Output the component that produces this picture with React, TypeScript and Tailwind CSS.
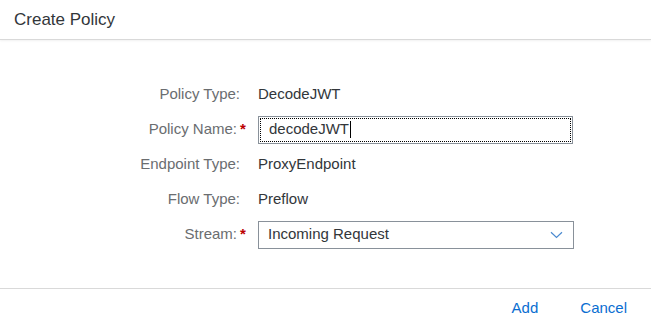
import React from 'react';

interface Row {
  label: string;
  required?: boolean;
  kind: 'text' | 'input' | 'select';
  value: string;
}

const rows: Row[] = [
  { label: 'Policy Type:', kind: 'text', value: 'DecodeJWT' },
  { label: 'Policy Name:', required: true, kind: 'input', value: 'decodeJWT' },
  { label: 'Endpoint Type:', kind: 'text', value: 'ProxyEndpoint' },
  { label: 'Flow Type:', kind: 'text', value: 'Preflow' },
  { label: 'Stream:', required: true, kind: 'select', value: 'Incoming Request' },
];

const Field: React.FC<{ row: Row }> = ({ row }) => {
  if (row.kind === 'input') {
    return (
      <div className="w-[315px] h-[28px] border border-[#89919a] bg-white p-px">
        <div className="h-full border border-dotted border-black flex items-center pl-[8px] text-[#32363a]">
          <span>{row.value}</span>
          <span className="w-px h-[17px] bg-black ml-px" />
        </div>
      </div>
    );
  }
  if (row.kind === 'select') {
    return (
      <div className="w-[316px] h-[28px] border border-[#89919a] bg-white flex items-center justify-between pl-[9px] pr-[10px] text-[#32363a]">
        <span>{row.value}</span>
        <svg width="13" height="8" viewBox="0 0 13 8" fill="none">
          <path d="M1 1.2 L6.5 6.4 L12 1.2" stroke="#4b8ad0" strokeWidth="1.2" />
        </svg>
      </div>
    );
  }
  return <span className="text-[#32363a]">{row.value}</span>;
};

export default function App() {
  return (
    <div
      className="w-[651px] h-[328px] bg-white flex flex-col text-[15px]"
      style={{ fontFamily: '"Liberation Sans", Arial, sans-serif' }}
    >
      {/* Header */}
      <div className="h-10 shrink-0 flex items-center pl-[14px] border-b border-[#d9d9d9] shadow-[0_1px_2px_rgba(0,0,0,0.06)]">
        <h1 className="text-[17px] text-[#32363a]">Create Policy</h1>
      </div>

      {/* Form */}
      <div className="flex-1 pt-[37px]">
        {rows.map((row) => (
          <div key={row.label} className="h-[35px] grid grid-cols-[250px_1fr] gap-x-[8px] items-center">
            <div className="flex justify-end items-center text-[#6a6d70]">
              <span>{row.label}</span>
              {row.required ? (
                <span className="ml-[3px] w-[10px] text-[#bb0000] font-bold">*</span>
              ) : (
                <span className="w-[10px]" />
              )}
            </div>
            <div className="flex items-center">
              <Field row={row} />
            </div>
          </div>
        ))}
      </div>

      {/* Footer */}
      <div className="h-10 shrink-0 border-t border-[#d9d9d9] flex items-center justify-end pr-[14px] gap-[22px]">
        <button className="px-[10px] text-[#0a6ed1]">Add</button>
        <button className="px-[10px] text-[#0a6ed1]">Cancel</button>
      </div>
    </div>
  );
}
